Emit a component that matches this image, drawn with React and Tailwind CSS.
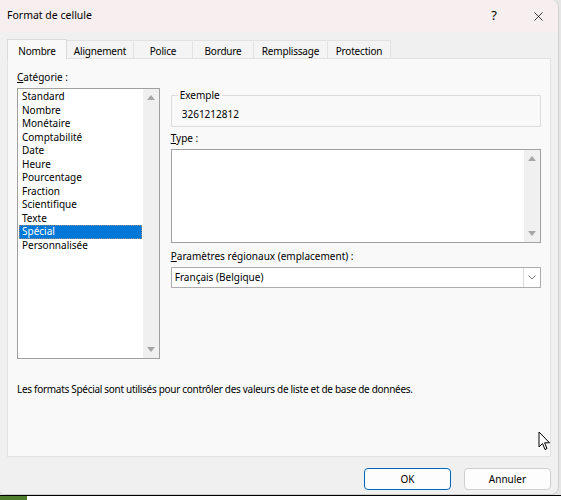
import { X } from 'lucide-react';

const categories = [
    'Standard',
    'Nombre',
    'Monétaire',
    'Comptabilité',
    'Date',
    'Heure',
    'Pourcentage',
    'Fraction',
    'Scientifique',
    'Texte',
    'Spécial',
    'Personnalisée',
];

const tabs = [
    { label: 'Nombre', width: 'w-[60px]', active: true },
    { label: 'Alignement', width: 'w-[67px]' },
    { label: 'Police', width: 'w-[59px]' },
    { label: 'Bordure', width: 'w-[61px]' },
    { label: 'Remplissage', width: 'w-[74px]' },
    { label: 'Protection', width: 'w-[63px]' },
];

const Arrow = ({ down }) => (
    <svg width="8" height="5" viewBox="0 0 8 5" className="block">
        {down ? <path d="M0 0 H8 L4 5 Z" fill="#a6a6a6" /> : <path d="M0 5 H8 L4 0 Z" fill="#a6a6a6" />}
    </svg>
);

const ScrollBar = () => (
    <div className="w-[16px] bg-[#f0f0f0] flex flex-col justify-between items-center py-[6px]">
        <Arrow />
        <Arrow down />
    </div>
);

const FormatCellDialog = () => {
    return (
        <div className="w-[561px] h-[500px] bg-[#e6e6e6] font-['Segoe_UI','Noto_Sans',sans-serif] text-[10px] text-black flex flex-col overflow-hidden relative">
            <div className="w-[559px] h-[495px] bg-[#f0f0f0] rounded-r-[8px] rounded-bl-[4px] border-r border-b border-[#cfcfcf] flex flex-col overflow-hidden">
                {/* Barre de titre */}
                <div className="h-[32px] bg-[#f7efef] flex items-center pl-[7px] pr-[12px]">
                    <span className="text-[10.5px] flex-1">Format de cellule</span>
                    <span className="text-[13px] w-[20px] text-center mr-[27px]">?</span>
                    <X size={15} strokeWidth={1.2} />
                </div>

                {/* Onglets */}
                <div className="flex items-end pl-[7px] mt-[7px] h-[19px] tracking-[-0.2px]">
                    {tabs.map((tab) => (
                        <div
                            key={tab.label}
                            className={`${tab.width} flex items-center justify-center pt-[3px] ${
                                tab.active
                                    ? 'h-[20px] bg-[#f9f9f9] border border-b-0 border-[#dadada] -mb-px relative z-10'
                                    : 'h-[18px] bg-[#f4f4f4] border border-l-0 border-b-0 border-[#e2e2e2]'
                            }`}
                        >
                            {tab.label}
                        </div>
                    ))}
                </div>

                {/* Contenu de l'onglet */}
                <div className="mx-[7px] h-[399px] bg-[#f9f9f9] border border-[#e2e2e2] px-[9px] pt-[12px] flex flex-col">
                    <div className="flex gap-[11px]">
                        {/* Gauche - Catégorie */}
                        <div className="w-[143px]">
                            <div className="leading-[13px] mb-[4px]">
                                <u>C</u>atégorie :
                            </div>
                            <div className="h-[271px] border border-[#a0a0a0] bg-white flex">
                                <div className="flex-1 pt-[1px] pl-[1px] pr-[1px]">
                                    {categories.map((cat) => (
                                        <div
                                            key={cat}
                                            className={`px-[3px] leading-[13.5px] ${
                                                cat === 'Spécial'
                                                    ? 'bg-[#0078d7] text-white outline outline-1 outline-dotted outline-[#8a8a8a] -outline-offset-1'
                                                    : ''
                                            }`}
                                        >
                                            {cat}
                                        </div>
                                    ))}
                                </div>
                                <ScrollBar />
                            </div>
                        </div>

                        {/* Droite */}
                        <div className="w-[371px] pt-[18px]">
                            <fieldset className="border border-[#dcdcdc] px-[10px] pb-[5px] pt-[6px] rounded-[1px]">
                                <legend className="ml-[-4px] px-[2px] leading-[13px]">Exemple</legend>
                                <div className="leading-[13px]">3261212812</div>
                            </fieldset>

                            <div className="leading-[13px] mt-[5px] mb-[4px]">
                                <u>T</u>ype :
                            </div>
                            <div className="h-[94px] border border-[#a0a0a0] bg-white flex">
                                <div className="flex-1"></div>
                                <ScrollBar />
                            </div>

                            <div className="leading-[13px] mt-[7px] mb-[4px]">
                                <u>P</u>aramètres régionaux (emplacement) :
                            </div>
                            <div className="h-[21px] border border-[#adadad] bg-white flex items-stretch">
                                <div className="flex-1 flex items-center pl-[3px]">Français (Belgique)</div>
                                <div className="w-[17px] border-l border-[#dcdcdc] flex items-center justify-center">
                                    <svg width="8" height="5" viewBox="0 0 8 5">
                                        <path d="M0.5 0.5 L4 4 L7.5 0.5" fill="none" stroke="#7a7a7a" strokeWidth="1" />
                                    </svg>
                                </div>
                            </div>
                        </div>
                    </div>

                    <div className="mt-[24px] leading-[13px] tracking-[-0.3px]">
                        Les formats Spécial sont utilisés pour contrôler des valeurs de liste et de base de données.
                    </div>
                </div>

                {/* Boutons */}
                <div className="flex justify-end gap-[13px] pr-[7px] mt-[11px]">
                    <button className="w-[87px] h-[22px] bg-[#fdfdfd] border border-[#0067c0] rounded-[4px]">
                        OK
                    </button>
                    <button className="w-[87px] h-[22px] bg-[#fdfdfd] border border-[#d0d0d0] rounded-[4px]">
                        Annuler
                    </button>
                </div>
            </div>

            {/* Bas de la feuille derrière */}
            <div className="flex h-[5px] border-t border-black">
                <div className="w-[27px] bg-[#4e7d2c]"></div>
                <div className="flex-1 bg-white"></div>
            </div>

            {/* Curseur */}
            <svg
                width="13"
                height="21"
                viewBox="0 0 13 21"
                className="absolute left-[538px] top-[431px]"
            >
                <path d="M1 1 L1 16 L4.5 12.5 L7 18.5 L9 17.6 L6.6 11.8 L11.5 11.8 Z" fill="white" stroke="black" strokeWidth="1" strokeLinejoin="round" />
            </svg>
        </div>
    );
};

export default function App() {
    return <FormatCellDialog />;
}
